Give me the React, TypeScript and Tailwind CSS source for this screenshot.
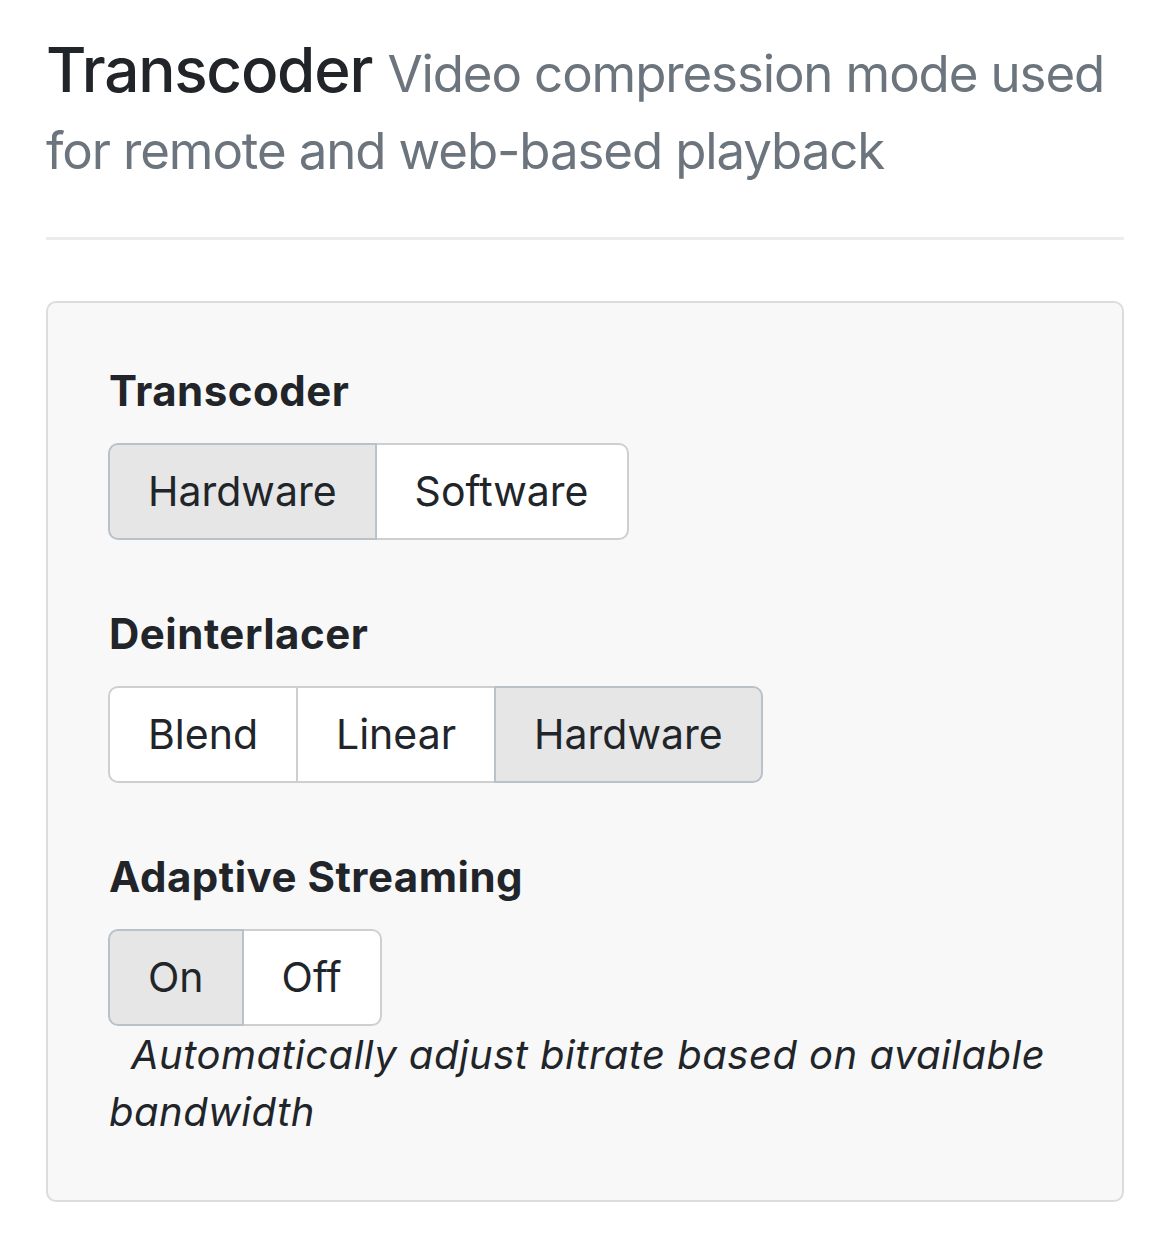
import { useState } from 'react';

type Group = {
  label: string;
  options: string[];
  value: string;
};

const groups: Group[] = [
  { label: 'Transcoder', options: ['Hardware', 'Software'], value: 'Hardware' },
  { label: 'Deinterlacer', options: ['Blend', 'Linear', 'Hardware'], value: 'Hardware' },
  { label: 'Adaptive Streaming', options: ['On', 'Off'], value: 'On' },
];

function ButtonGroup({ options, initial }: { options: string[]; initial: string }) {
  const [selected, setSelected] = useState(initial);

  return (
    <div className="inline-flex">
      {options.map((opt, i) => {
        const active = opt === selected;
        const first = i === 0;
        const last = i === options.length - 1;
        return (
          <button
            key={opt}
            onClick={() => setSelected(opt)}
            className={
              'relative border-2 px-[38px] py-[17px] text-[41px] leading-[59px] text-[#212529] ' +
              (active ? 'z-10 bg-[#e6e6e6] border-[#b9c1cb] ' : 'bg-white border-[#cfcfcf] ') +
              (first ? 'rounded-l-[10px] ' : '-ml-[2px] ') +
              (last ? 'rounded-r-[10px]' : '')
            }
          >
            {opt}
          </button>
        );
      })}
    </div>
  );
}

export default function App() {
  return (
    <div className="min-h-[1238px] bg-white px-[46px] pt-[31px] font-['Inter',sans-serif] text-[#212529]">
      {/* Header */}
      <h3 className="text-[62px] font-medium leading-[77px] tracking-[-0.02em]">
        Transcoder{' '}
        <small className="text-[51px] font-normal leading-[60px] tracking-[-0.022em] text-[#6c757d]">
          Video compression mode used for remote and web-based playback
        </small>
      </h3>

      <hr className="mt-[52px] border-t-[3px] border-[#ececec]" />

      {/* Settings card */}
      <div className="mt-[61px] rounded-[10px] border-2 border-[#dcdcdc] bg-[#f8f8f8] px-[60px] pt-[58px] pb-[60px]">
        {groups.map((g, idx) => (
          <div key={g.label} className={idx > 0 ? 'mt-[64px]' : ''}>
            <div className="mb-[22px] pl-[1px] text-[42px] font-bold leading-[60px] tracking-[0.012em]">{g.label}</div>
            <ButtonGroup options={g.options} initial={g.value} />
          </div>
        ))}
        <p className="pl-[1px] indent-[22px] text-[40px] italic leading-[57px] tracking-[0.012em]">
          Automatically adjust bitrate based on available bandwidth
        </p>
      </div>
    </div>
  );
}
